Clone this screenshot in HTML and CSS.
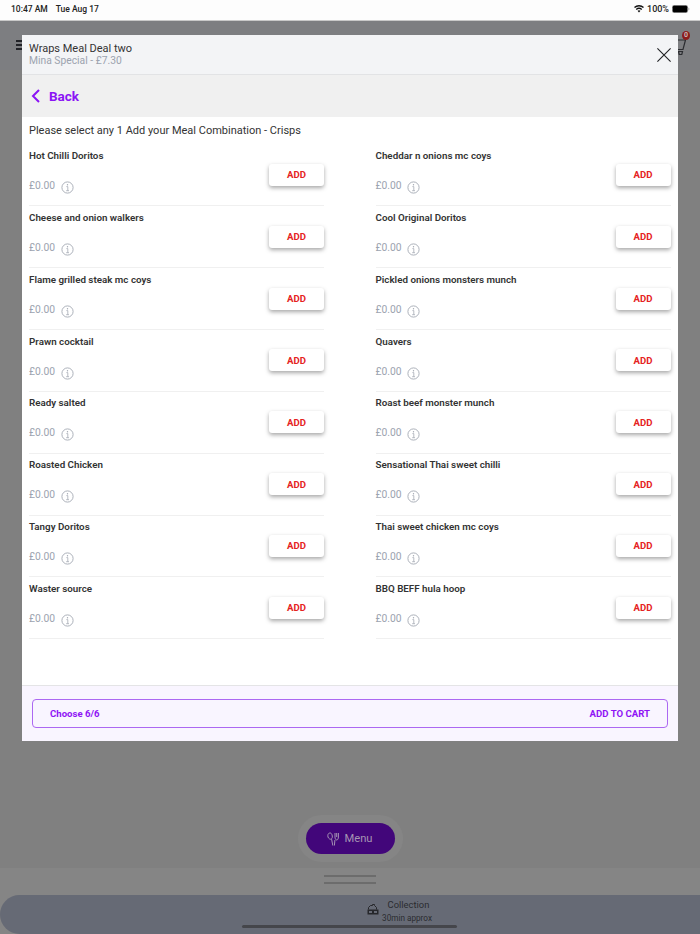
FILE: index.html
```html
<!DOCTYPE html>
<html lang="en">
<head>
<meta charset="utf-8">
<title>Wraps Meal Deal two</title>
<link rel="stylesheet" href="styles.css">
</head>
<body>
<svg class="defs" width="0" height="0" aria-hidden="true">
  <symbol id="info" viewBox="0 0 13 13">
    <circle cx="6.5" cy="6.5" r="5.6" fill="none" stroke="currentColor" stroke-width=".9"/>
    <circle cx="6.5" cy="3.7" r=".7" fill="currentColor"/>
    <path d="M5.4 5.6h1.400v4M5.200 9.700h2.800" fill="none" stroke="currentColor" stroke-width=".8"/>
  </symbol>
</svg>
<div class="page">
  <div class="status">
    <div class="status-left"><span>10:47 AM</span><span>Tue Aug 17</span></div>
    <div class="status-right">
      <svg class="wifi" width="10" height="8" viewBox="0 0 13 10"><path d="M6.500 9.600 4.600 7.400a2.900 2.900 0 0 1 3.800 0zM3.500 6.200 2.300 4.900a6.300 6.300 0 0 1 8.400 0L9.500 6.200a4.600 4.600 0 0 0-6 0zM1.300 3.800 0 2.500a9.500 9.500 0 0 1 13 0l-1.300 1.300a7.700 7.700 0 0 0-10.400 0z" fill="#111"/></svg>
      <span>100%</span>
      <svg class="battery" width="18" height="8" viewBox="0 0 18 8"><rect x=".3" y=".3" width="15.400" height="7.400" rx="2" fill="#000" stroke="#aaa" stroke-width=".6"/><path d="M16.400 2.700v2.600c.7-.2 1.100-.7 1.100-1.300s-.4-1.100-1.100-1.300z" fill="#aaa"/></svg>
    </div>
  </div>
  <header class="topbar">
    <div class="burger"><i></i><i></i><i></i></div>
    <div class="cart">
      <svg width="16" height="24" viewBox="0 0 16 24"><path d="M7 6h8.500L13 15.500H7M8.500 17.500h4l-.7 3H9.200z" fill="none" stroke="#2b2c30" stroke-width="1.200"/></svg>
      <span class="badge">0</span>
    </div>
  </header>
  <main class="behind">
    <div class="menu-halo"><div class="menu-btn">
      <svg width="13" height="14" viewBox="0 0 13 14"><path d="M5.800 13.500 4.600 7.200M7.400 13.500l.5-5.500M2.700 1C1 1.300.5 3.300 1 5c.5 1.600 2.200 2.600 3.200 2.100C5.500 6.500 5.600 4.300 5 2.800 4.600 1.500 3.700.8 2.700 1zM8 1v4c0 1.700.7 3 1.700 3s1.700-1.300 1.700-3V1M9.700 1v4" fill="none" stroke="#a594b3" stroke-width="1"/></svg>
      <span>Menu</span>
    </div></div>
  </main>
  <div class="sheet">
    <div class="handle"><i></i><i></i></div>
    <div class="collection">
      <svg class="scooter" width="12" height="11" viewBox="0 0 12 11"><path d="M1.500 5.500V3.500L3.500 1.500H5.500V.5H7.500V1.500L9.500 3.500V5.500" fill="none" stroke="#26272b" stroke-width="1"/><path d="M.5 5.500h11v5h-11z" fill="#26272b"/><path d="M2 7h3v2H2zM7 7h3v2H7z" fill="#666a75"/></svg>
      <div class="collection-text"><span class="c1">Collection</span><span class="c2">30min approx</span></div>
      <div class="home-bar"></div>
    </div>
  </div>

  <section class="modal">
    <div class="modal-head">
      <div>
        <div class="modal-title">Wraps Meal Deal two</div>
        <div class="modal-sub">Mina Special - £7.30</div>
      </div>
      <svg class="close" width="14" height="14" viewBox="0 0 14 14"><path d="M.4.400l13.200 13.200M13.600.400.400 13.600" stroke="#1f2023" stroke-width="1.100" fill="none"/></svg>
    </div>
    <div class="back">
      <svg width="9" height="14" viewBox="0 0 9 14"><path d="M8 1 2 7l6 6" fill="none" stroke="#8b14f5" stroke-width="2"/></svg>
      <span>Back</span>
    </div>
    <h2 class="prompt">Please select any 1 Add your Meal Combination - Crisps</h2>
    <div class="grid">
      <div class="row"><div class="info"><div class="name">Hot Chilli Doritos</div><div class="price"><span>£0.00</span><svg class="i"><use href="#info"/></svg></div></div><button class="add">ADD</button></div>
      <div class="row"><div class="info"><div class="name">Cheddar n onions mc coys</div><div class="price"><span>£0.00</span><svg class="i"><use href="#info"/></svg></div></div><button class="add">ADD</button></div>
      <div class="row"><div class="info"><div class="name">Cheese and onion walkers</div><div class="price"><span>£0.00</span><svg class="i"><use href="#info"/></svg></div></div><button class="add">ADD</button></div>
      <div class="row"><div class="info"><div class="name">Cool Original Doritos</div><div class="price"><span>£0.00</span><svg class="i"><use href="#info"/></svg></div></div><button class="add">ADD</button></div>
      <div class="row"><div class="info"><div class="name">Flame grilled steak mc coys</div><div class="price"><span>£0.00</span><svg class="i"><use href="#info"/></svg></div></div><button class="add">ADD</button></div>
      <div class="row"><div class="info"><div class="name">Pickled onions monsters munch</div><div class="price"><span>£0.00</span><svg class="i"><use href="#info"/></svg></div></div><button class="add">ADD</button></div>
      <div class="row"><div class="info"><div class="name">Prawn cocktail</div><div class="price"><span>£0.00</span><svg class="i"><use href="#info"/></svg></div></div><button class="add">ADD</button></div>
      <div class="row"><div class="info"><div class="name">Quavers</div><div class="price"><span>£0.00</span><svg class="i"><use href="#info"/></svg></div></div><button class="add">ADD</button></div>
      <div class="row"><div class="info"><div class="name">Ready salted</div><div class="price"><span>£0.00</span><svg class="i"><use href="#info"/></svg></div></div><button class="add">ADD</button></div>
      <div class="row"><div class="info"><div class="name">Roast beef monster munch</div><div class="price"><span>£0.00</span><svg class="i"><use href="#info"/></svg></div></div><button class="add">ADD</button></div>
      <div class="row"><div class="info"><div class="name">Roasted Chicken</div><div class="price"><span>£0.00</span><svg class="i"><use href="#info"/></svg></div></div><button class="add">ADD</button></div>
      <div class="row"><div class="info"><div class="name">Sensational Thai sweet chilli</div><div class="price"><span>£0.00</span><svg class="i"><use href="#info"/></svg></div></div><button class="add">ADD</button></div>
      <div class="row"><div class="info"><div class="name">Tangy Doritos</div><div class="price"><span>£0.00</span><svg class="i"><use href="#info"/></svg></div></div><button class="add">ADD</button></div>
      <div class="row"><div class="info"><div class="name">Thai sweet chicken mc coys</div><div class="price"><span>£0.00</span><svg class="i"><use href="#info"/></svg></div></div><button class="add">ADD</button></div>
      <div class="row"><div class="info"><div class="name">Waster source</div><div class="price"><span>£0.00</span><svg class="i"><use href="#info"/></svg></div></div><button class="add">ADD</button></div>
      <div class="row"><div class="info"><div class="name">BBQ BEFF hula hoop</div><div class="price"><span>£0.00</span><svg class="i"><use href="#info"/></svg></div></div><button class="add">ADD</button></div>
    </div>
    <div class="modal-foot">
      <div class="cta"><span>Choose 6/6</span><span>ADD TO CART</span></div>
    </div>
  </section>
</div>
</body>
</html>
```
FILE: styles.css
```css
* { box-sizing: border-box; }
html, body { margin: 0; height: 100%; }
body { font-family: Roboto, "Liberation Sans", sans-serif; background: #808080; overflow: hidden; }
.defs { position: absolute; }
.page { position: relative; width: 700px; height: 934px; display: flex; flex-direction: column; }

.status { height: 21px; flex: none; background: #fdfdfd; border-bottom: 1px solid #c9c9c9; display: flex; justify-content: space-between; align-items: center; padding: 0 10px 3px 11px; font-size: 8.500px; font-weight: 500; color: #222; }
.status-left { display: flex; gap: 8px; }
.status-right { display: flex; align-items: center; gap: 3px; }
.status-right span { font-size: 9px; }

.topbar { height: 49px; flex: none; background: #7d7e81; position: relative; display: flex; justify-content: space-between; align-items: center; padding: 0 14px 0 16px; }
.burger { display: flex; flex-direction: column; gap: 2px; width: 7px; margin-top: -1px; }
.burger i { height: 2px; background: #222328; display: block; }
.cart { position: relative; width: 16px; height: 24px; margin-top: 1px; }
.badge { position: absolute; left: 12px; top: -3px; width: 8px; height: 9px; border-radius: 50%; background: #8c1c1c; color: #c9b9b9; font-size: 7px; line-height: 9px; text-align: center; font-weight: 700; }

.behind { flex: 1; display: flex; justify-content: center; align-items: flex-start; padding-top: 745px; height: 0; min-height: 0; }
.menu-halo { padding: 8px; background: #858585; border-radius: 24px; flex: none; }
.menu-btn { width: 89px; height: 31px; border-radius: 16px; background: #42067a; display: flex; align-items: center; justify-content: center; gap: 4px; color: #a594b3; font-size: 11.200px; }

.sheet { height: 66px; flex: none; background: #858585; display: flex; flex-direction: column; }
.handle { height: 27px; flex: none; display: flex; flex-direction: column; align-items: center; gap: 5px; padding-top: 7px; }
.handle i { width: 52px; height: 2px; background: #6c6c6c; display: block; }
.collection { flex: 1; background: #666a75; border-radius: 20px 0 0 20px; position: relative; display: flex; justify-content: center; align-items: flex-start; gap: 3px; padding: 3px 0 0 99px; color: #2b2c30; }
.scooter { margin-top: 6px; }
.collection-text { display: flex; flex-direction: column; align-items: center; }
.c1 { font-size: 9.400px; line-height: 14px; margin-left: 3px; }
.c2 { font-size: 8.200px; line-height: 12px; }
.home-bar { position: absolute; left: 242px; bottom: 6px; width: 215px; height: 3px; border-radius: 2px; background: #45464b; }

.modal { position: absolute; left: 22px; top: 35px; width: 656px; height: 706px; background: #fff; display: flex; flex-direction: column; color: #333; }
.modal-head { height: 40px; flex: none; background: #f3f4f6; border-bottom: 1px solid #e2e3e5; display: flex; justify-content: space-between; align-items: center; padding: 0 7px; }
.modal-title { font-size: 11px; line-height: 12px; color: #333; }
.modal-sub { font-size: 10.300px; line-height: 11px; color: #9ca3af; }
.back { height: 42px; flex: none; background: #f0f0f0; display: flex; align-items: center; gap: 9px; padding-left: 9px; color: #8b14f5; font-size: 13.500px; font-weight: 700; }
.prompt { margin: 0; padding: 7px 7px 0; height: 27.500px; flex: none; font-size: 11px; line-height: 13px; font-weight: 400; color: #333; }
.grid { flex: 1; display: grid; grid-template-columns: 295px 295px; column-gap: 51.500px; padding: 0 7px; grid-auto-rows: 61.850px; align-content: start; }
.row { border-bottom: 1px solid #f0f0f0; display: flex; justify-content: space-between; align-items: center; }
.info { align-self: stretch; padding-top: 4.500px; }
.name { font-size: 9.800px; line-height: 14px; font-weight: 600; color: #333; }
.price { display: flex; align-items: flex-start; margin-top: 16px; color: #9ca3af; font-size: 10.300px; line-height: 13px; }
.i { width: 13px; height: 13px; margin-left: 5.500px; margin-top: 2px; color: #a3a8b2; }
.add { width: 55px; height: 22px; border: 0; border-radius: 3px; background: #fff; color: #e52222; font: 700 9.600px Roboto, sans-serif; box-shadow: 0 2px 4px rgba(0, 0, 0, .35); padding: 0; margin-top: 0; }
.modal-foot { height: 56px; flex: none; background: #f9f5ff; border-top: 1px solid #e4e4e6; padding: 13px 10px 0; }
.cta { height: 29px; border: 1px solid #ac68f2; border-radius: 4px; display: flex; justify-content: space-between; align-items: center; padding: 0 17px; color: #8f14f5; font-size: 9.600px; font-weight: 700; }
```
